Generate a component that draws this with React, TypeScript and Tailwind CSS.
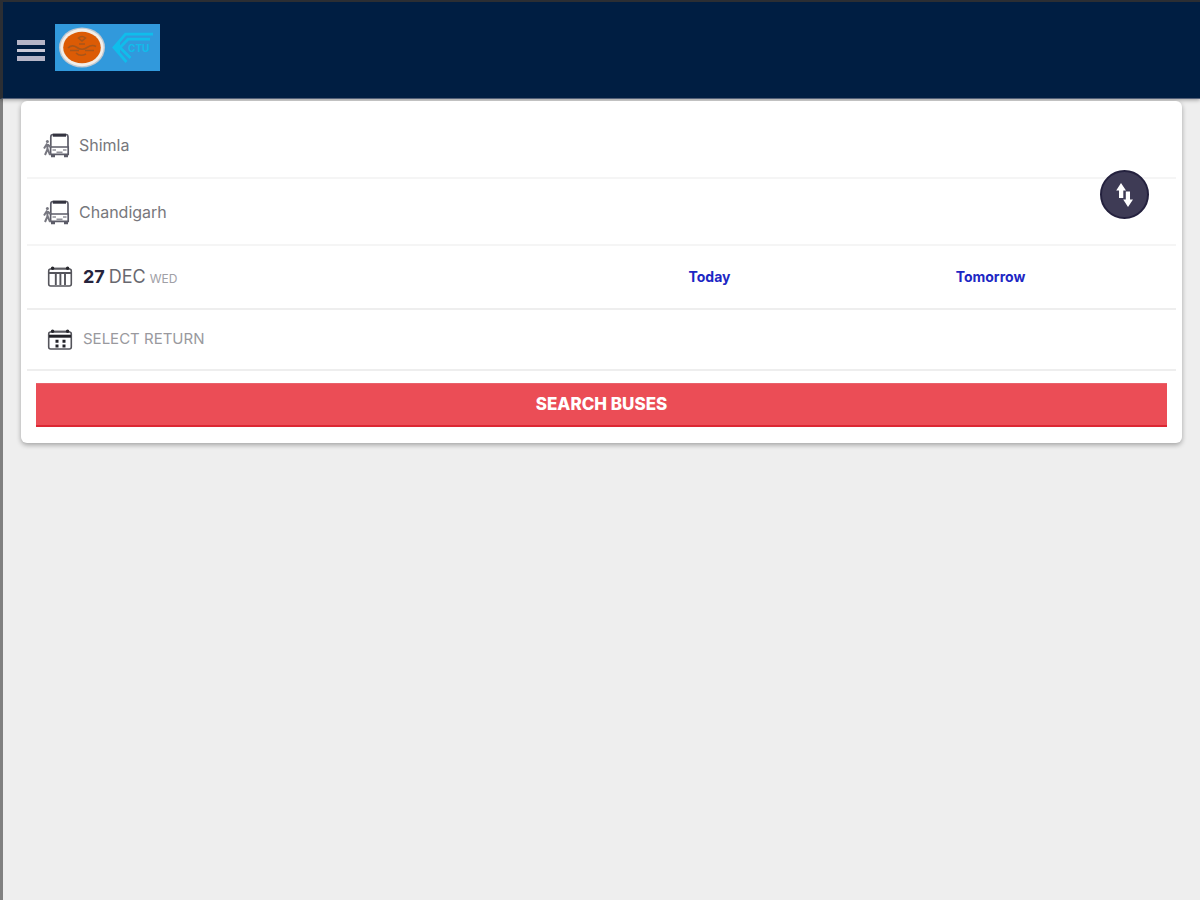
import { useState } from "react";

function BusIcon() {
  return (
    <svg width="28" height="28" viewBox="0 0 28 28" fill="none" stroke="#5c5c68" strokeWidth="1.7" className="shrink-0" aria-hidden="true">
      <path d="M7.8 16V6Q7.8 3.5 10 3.5H23Q25 3.5 25 6V16" />
      <path d="M9.8 4.2H23" stroke="#33333f" strokeWidth="3" />
      <path d="M7.6 16H25.2V23.4H7.6Z" />
      <path d="M9.5 19H13M20 19H23.5M13.5 21.3H19.5" stroke="#92929a" />
      <path d="M8 25H12M21 25H25" strokeWidth="2.4" />
      <circle cx="4.4" cy="10.4" r="1.5" fill="#777780" stroke="none" />
      <path d="M4.2 12.5L1 17.5M4.4 13V18.5L2 24M4.6 18L7 24M4.8 13.5L7.4 16" stroke="#777780" strokeWidth="2" />
    </svg>
  );
}

function CalendarIcon({ variant }: { variant: "depart" | "return" }) {
  return (
    <svg width="26" height="22" viewBox="0 0 26 22" fill="none" stroke="#55555c" strokeWidth="1.6" className="shrink-0" aria-hidden="true">
      <rect x="1.7" y="3" width="22.6" height="17" rx="2" />
      <path d="M4 2.2H22" strokeWidth="1.2" />
      <circle cx="5.6" cy="2.2" r="1.7" fill="#26262c" stroke="none" />
      <circle cx="20.6" cy="2.2" r="1.7" fill="#26262c" stroke="none" />
      {variant === "depart" ? (
        <>
          <path d="M2 7H24" strokeWidth="2" />
          <path d="M8.8 8V19M13.4 8V19M18 8V19" strokeWidth="1.9" />
        </>
      ) : (
        <>
          <path d="M2 7.2H24" stroke="#222228" strokeWidth="3" />
          <path d="M8.5 12.3H11.5M15.5 12.3H18.5M8.5 16.9H11.5M15.5 16.9H18.5" stroke="#222228" strokeWidth="3" />
        </>
      )}
    </svg>
  );
}

function Logo() {
  return (
    <svg width="105" height="47" viewBox="0 0 105 47" role="img" aria-label="CTU">
      <rect width="105" height="47" fill="#3199dc" />
      <ellipse cx="27" cy="23.5" rx="23" ry="20" fill="#c2c8cf" />
      <ellipse cx="27" cy="23.5" rx="21.6" ry="18.8" fill="#f2eee9" />
      <ellipse cx="27" cy="23.5" rx="18.8" ry="15.8" fill="#dc5b05" />
      <g fill="none" stroke="#a8561a" strokeWidth="1.6">
        <path d="M23.5 14Q27 11 30.5 14L27 17Z" />
        <path d="M13 24Q17 20 22 23.5T32 23.5T41 22.5" />
        <path d="M15 26.5H24M30 26.5H39M21 29Q25 33 31 30M24 20H30" />
      </g>
      <g fill="none" stroke="#10bdeb" strokeWidth="2.8">
        <path d="M98 10.2H70.5L59 23.5L71.5 38" />
        <path d="M95 15.2H73L65 23.5L75.5 34" />
      </g>
      <path d="M57.5 23.5L65 16V31Z" fill="#10bdeb" />
      <text x="73" y="28" fill="#10bdeb" fontSize="10" fontWeight="700" fontFamily="Inter, sans-serif">CTU</text>
    </svg>
  );
}

function SwapIcon() {
  return (
    <svg width="20" height="26" viewBox="0 0 20 26" fill="#ffffff" aria-hidden="true">
      <path d="M6 1L11 8.4H8.3V16H4V8.4H1.2Z" />
      <path d="M13 25L8.2 17.6H10.8V9.5H15V17.6H18Z" />
    </svg>
  );
}

function PlaceField({ label, value, onChange }: { label: string; value: string; onChange: (v: string) => void }) {
  return (
    <label className="flex h-[67px] items-center gap-2 border-b-2 border-[#f5f5f5] pl-4">
      <BusIcon />
      <input
        aria-label={label}
        value={value}
        onChange={(e) => onChange(e.target.value)}
        className="min-w-0 flex-1 bg-transparent text-base text-[#77777c] outline-none"
      />
    </label>
  );
}

export default function App() {
  const [from, setFrom] = useState("Shimla");
  const [to, setTo] = useState("Chandigarh");

  return (
    <div className="flex min-h-screen flex-col border-l-[3px] border-[#808080] bg-[#eeeeee] font-['Inter',sans-serif]">
      <header className="-ml-[3px] flex h-[99px] items-center gap-2 border-t-2 border-b border-l-[3px] border-t-[#2b2e33] border-b-[#536078] border-l-[#2b2e33] bg-[#001e42] pb-[6px] pl-3 shadow-[0_1px_4px_rgba(0,0,0,0.35)]">
        <button type="button" aria-label="Menu" className="mt-[6px] flex w-8 flex-col gap-1 px-[2px] py-1">
          <span className="h-[5px] w-full bg-[#b5b5c7]" />
          <span className="h-[3px] w-full bg-[#c9c9d6]" />
          <span className="h-[5px] w-full bg-[#b5b5c7]" />
        </button>
        <a href="#" aria-label="Home"><Logo /></a>
      </header>

      <main className="px-[18px] pt-[2px]">
        <form
          onSubmit={(e) => e.preventDefault()}
          className="rounded-md bg-white px-[6px] pt-[11px] pb-4 shadow-[0_2px_5px_rgba(0,0,0,0.32)]"
        >
          <div className="relative">
            <PlaceField label="From" value={from} onChange={setFrom} />
            <PlaceField label="To" value={to} onChange={setTo} />
            <button
              type="button"
              aria-label="Swap places"
              onClick={() => {
                setFrom(to);
                setTo(from);
              }}
              className="absolute top-[58px] right-[27px] flex size-[49px] items-center justify-center rounded-full border-2 border-[#24213e] bg-[#3e3b55]"
            >
              <SwapIcon />
            </button>
          </div>

          <div className="grid h-16 grid-cols-[542fr_281fr_281fr] items-center border-b-2 border-[#eeeeee] pr-[45px]">
            <button type="button" className="flex items-center gap-[10px] pl-5 text-left">
              <CalendarIcon variant="depart" />
              <span className="flex items-baseline gap-1 text-lg text-[#68686f]">
                <b className="font-bold text-[#26243c]">27</b>
                <span>DEC</span>
                <span className="text-xs text-[#a0a0a6]">WED</span>
              </span>
            </button>
            <button type="button" className="justify-self-center text-sm font-bold text-[#1d27c4]">Today</button>
            <button type="button" className="justify-self-center text-sm font-bold text-[#1d27c4]">Tomorrow</button>
          </div>

          <div className="flex h-[61px] items-center border-b-2 border-[#eeeeee]">
            <button type="button" className="flex items-center gap-[10px] pl-5 text-[15px] text-[#99999e]">
              <CalendarIcon variant="return" />
              SELECT RETURN
            </button>
          </div>

          <div className="px-[9px] pt-3">
            <button type="submit" className="h-11 w-full border-t border-b-2 border-t-[#e8626b] border-b-[#dc2733] bg-[#eb4d56] text-[17px] font-extrabold text-white">
              SEARCH BUSES
            </button>
          </div>
        </form>
      </main>
    </div>
  );
}
